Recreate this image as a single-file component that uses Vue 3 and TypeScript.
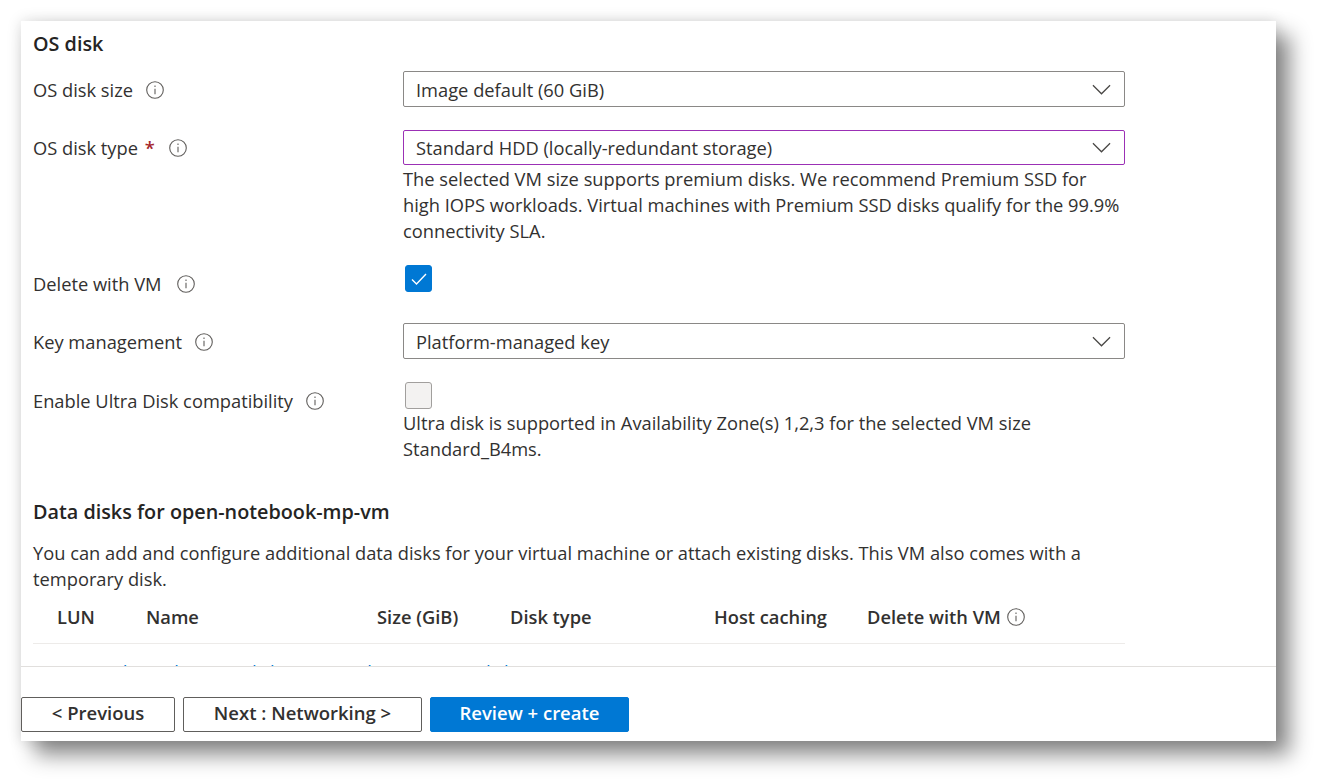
<script setup lang="ts">
const tableColumns = [
  { label: 'LUN', width: '89px' },
  { label: 'Name', width: '231px' },
  { label: 'Size (GiB)', width: '133px' },
  { label: 'Disk type', width: '204px' },
  { label: 'Host caching', width: '153px' },
]
</script>

<template>
  <div class="page">
    <div class="card">
      <div class="content">
        <h2 class="heading">OS disk</h2>

        <div class="row row-size">
          <div class="label">
            OS disk size
            <svg class="info" viewBox="0 0 18 18"><circle cx="9" cy="9" r="8.3" /><path d="M9 7.8v5.4M9 4.6v1.4" /></svg>
          </div>
          <div class="control">
            <div class="select">
              <span>Image default (60 GiB)</span>
              <svg class="chevron" viewBox="0 0 20 11"><path d="M1 1l9 9 9-9" /></svg>
            </div>
          </div>
        </div>

        <div class="row row-type">
          <div class="label">
            <span>OS disk type <b class="req">*</b></span>
            <svg class="info" viewBox="0 0 18 18"><circle cx="9" cy="9" r="8.3" /><path d="M9 7.8v5.4M9 4.6v1.4" /></svg>
          </div>
          <div class="control">
            <div class="select focused">
              <span>Standard HDD (locally-redundant storage)</span>
              <svg class="chevron" viewBox="0 0 20 11"><path d="M1 1l9 9 9-9" /></svg>
            </div>
            <p class="help">The selected VM size supports premium disks. We recommend Premium SSD for high IOPS workloads. Virtual machines with Premium SSD disks qualify for the 99.9% connectivity SLA.</p>
          </div>
        </div>

        <div class="row row-delete">
          <div class="label">
            Delete with VM
            <svg class="info" viewBox="0 0 18 18"><circle cx="9" cy="9" r="8.3" /><path d="M9 7.8v5.4M9 4.6v1.4" /></svg>
          </div>
          <div class="control">
            <div class="check checked">
              <svg viewBox="0 0 16 12"><path d="M1 6.5l4.5 4.5L15 1" /></svg>
            </div>
          </div>
        </div>

        <div class="row row-key">
          <div class="label">
            Key management
            <svg class="info" viewBox="0 0 18 18"><circle cx="9" cy="9" r="8.3" /><path d="M9 7.8v5.4M9 4.6v1.4" /></svg>
          </div>
          <div class="control">
            <div class="select">
              <span>Platform-managed key</span>
              <svg class="chevron" viewBox="0 0 20 11"><path d="M1 1l9 9 9-9" /></svg>
            </div>
          </div>
        </div>

        <div class="row row-ultra">
          <div class="label">
            Enable Ultra Disk compatibility
            <svg class="info" viewBox="0 0 18 18"><circle cx="9" cy="9" r="8.3" /><path d="M9 7.8v5.4M9 4.6v1.4" /></svg>
          </div>
          <div class="control">
            <div class="check"></div>
            <p class="help help-ultra">Ultra disk is supported in Availability Zone(s) 1,2,3 for the selected VM size Standard_B4ms.</p>
          </div>
        </div>

        <h2 class="heading heading-data">Data disks for open-notebook-mp-vm</h2>
        <p class="intro">You can add and configure additional data disks for your virtual machine or attach existing disks. This VM also comes with a temporary disk.</p>

        <div class="table-head">
          <span v-for="col in tableColumns" :key="col.label" class="th" :style="{ width: col.width }">{{ col.label }}</span>
          <span class="th th-last">
            Delete with VM
            <svg class="info" viewBox="0 0 18 18"><circle cx="9" cy="9" r="8.3" /><path d="M9 7.8v5.4M9 4.6v1.4" /></svg>
          </span>
        </div>

        <div class="links">
          <a>Create and attach a new disk</a>
          <a>Attach an existing disk</a>
        </div>
      </div>

      <div class="footer">
        <button class="btn">&lt; Previous</button>
        <button class="btn btn-next">Next : Networking &gt;</button>
        <button class="btn primary">Review + create</button>
      </div>
    </div>
  </div>
</template>

<style>
html, body {
  background: #fff;
}
</style>

<style scoped>
.page {
  box-sizing: border-box;
  height: 783px;
  padding: 21px 0 0 21px;
  overflow: hidden;
}
.card {
  width: 1255px;
  height: 720px;
  background: #fff;
  display: flex;
  flex-direction: column;
  box-shadow: 14px 14px 20px rgba(0, 0, 0, 0.45), 0 0 14px rgba(0, 0, 0, 0.14);
  font-family: "Open Sans", "Noto Sans", sans-serif;
  font-size: 18.3px;
  color: #323130;
}
.content {
  flex: 1;
  min-height: 0;
  overflow: hidden;
  padding: 0 0 0 12px;
}
.heading {
  margin: 0;
  font-size: 19.8px;
  font-weight: 600;
  line-height: 26px;
  padding-top: 10px;
  color: #252423;
}
.row {
  display: flex;
  width: 1092px;
}
.row-size { margin-top: 14px; }
.row-type { margin-top: 23px; }
.row-delete { margin-top: 21px; }
.row-key { margin-top: 22px; }
.row-ultra { margin-top: 23px; }
.label {
  width: 370px;
  flex: none;
  height: 36px;
  display: flex;
  align-items: center;
  gap: 13px;
  white-space: nowrap;
}
.label .info {
  margin-top: 1px;
}
.row-type .label {
  height: 34px;
  gap: 14px;
}
.row-delete .label {
  gap: 15px;
}
.control {
  flex: 1;
  min-width: 0;
}
.select {
  box-sizing: border-box;
  height: 36px;
  border: 1px solid #8a8886;
  border-radius: 2px;
  display: flex;
  align-items: center;
  justify-content: space-between;
  padding: 0 13px 0 12px;
}
.select.focused {
  border-color: #9b30b5;
  height: 35px;
  margin-bottom: 1px;
}
.chevron {
  width: 19px;
  height: 11px;
  fill: none;
  stroke: #484644;
  stroke-width: 1.3;
}
.help {
  margin: 0;
  line-height: 26px;
}
.help-ultra {
  margin-top: 1px;
}
.check {
  box-sizing: border-box;
  width: 27px;
  height: 27px;
  margin-left: 2px;
  border: 1px solid #a19f9d;
  border-radius: 3px;
  background: #f3f2f1;
  display: flex;
  align-items: center;
  justify-content: center;
}
.check.checked {
  background: #0078d4;
  border-color: #0078d4;
}
.check svg {
  width: 16px;
  height: 12px;
  fill: none;
  stroke: #fff;
  stroke-width: 1.4;
}
.info {
  flex: none;
  width: 18px;
  height: 18px;
  fill: none;
  stroke: #605e5c;
  stroke-width: 1.1;
}
.req {
  margin-left: 2px;
  color: #a4262c;
  font-weight: 600;
}
.heading-data {
  padding-top: 0;
  margin-top: 37px;
}
.intro {
  margin: 15px 0 0;
  width: 1092px;
  line-height: 26px;
}
.table-head {
  width: 1092px;
  box-sizing: border-box;
  height: 50px;
  padding: 8px 0 0 24px;
  border-bottom: 1px solid #edebe9;
  display: flex;
  font-weight: 600;
  line-height: 30px;
  margin-top: 2px;
}
.th {
  flex: none;
  white-space: nowrap;
}
.th-last {
  display: flex;
  align-items: center;
  gap: 6px;
  height: 30px;
}
.links {
  margin-top: 15px;
  padding-left: 1px;
  display: flex;
  gap: 44px;
  color: #0078d4;
  line-height: 26px;
}
.footer {
  flex: none;
  height: 75px;
  box-sizing: border-box;
  border-top: 1px solid #e1dfdd;
  padding: 30px 0 0;
  display: flex;
  gap: 8px;
}
.btn {
  box-sizing: border-box;
  height: 35px;
  width: 154px;
  background: #fff;
  border: 1px solid #605e5c;
  border-radius: 2px;
  font: 600 18.5px "Open Sans", "Noto Sans", sans-serif;
  color: #323130;
  padding: 0 0 5px;
}
.btn-next {
  width: 239px;
}
.primary {
  width: 199px;
  background: #0078d4;
  border-color: #0078d4;
  color: #fff;
}
</style>
